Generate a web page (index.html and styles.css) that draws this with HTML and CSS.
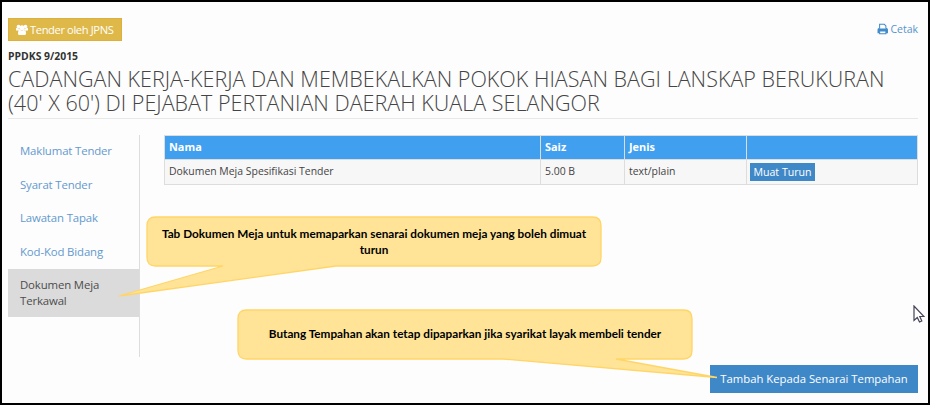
FILE: index.html
```html
<!DOCTYPE html>
<html lang="ms">
<head>
<meta charset="utf-8">
<title>Tender</title>
<link rel="stylesheet" href="styles.css">
</head>
<body>
<main class="page">
  <div class="topbar">
    <span class="badge"><svg class="icon-users" viewBox="0 0 24 22"><circle cx="5" cy="5" r="3.6"/><circle cx="19" cy="5" r="3.6"/><circle cx="12" cy="7.5" r="5"/><path d="M0 13V10q0-3 2-2.5 3 2 5 1 0 3 1.5 4zM24 13V10q0-3-2-2.500-3 2-5 1 0 3-1.500 4zM4 19q0-7 4-7.500 4 3 8 0 4 .5 4 7.500 0 3-3 3H7q-3 0-3-3z"/></svg><span class="badge-text">Tender oleh JPNS</span></span>
    <a class="print"><svg class="icon-print" viewBox="0 0 22 22"><path class="body" d="M1 19v-7q0-3 3-3h14q3 0 3 3v7h-4v-3H5v3z"/><path class="sheet" d="M5 10V2h9l3 3v5M5 15v5h12v-5z"/></svg><span class="print-text">Cetak</span></a>
  </div>
  <div class="code">PPDKS 9/2015</div>
  <h1>CADANGAN KERJA-KERJA DAN MEMBEKALKAN POKOK HIASAN BAGI LANSKAP BERUKURAN<br>(40' X 60') DI PEJABAT PERTANIAN DAERAH KUALA SELANGOR</h1>
  <div class="content">
    <nav class="tabs">
      <a>Maklumat Tender</a>
      <a>Syarat Tender</a>
      <a>Lawatan Tapak</a>
      <a>Kod-Kod Bidang</a>
      <a class="active">Dokumen Meja<br>Terkawal</a>
    </nav>
    <section class="panel">
      <table>
        <colgroup><col class="c-name"><col class="c-size"><col class="c-type"><col></colgroup>
        <thead><tr><th>Nama</th><th>Saiz</th><th>Jenis</th><th></th></tr></thead>
        <tbody><tr><td>Dokumen Meja Spesifikasi Tender</td><td>5.00 B</td><td>text/plain</td><td class="action"><a class="download">Muat Turun</a></td></tr></tbody>
      </table>
    </section>
  </div>
  <div class="footer"><a class="order">Tambah Kepada Senarai Tempahan</a></div>
</main>
<div class="callout first">
  <svg class="shape" viewBox="0 0 454 49"><path d="M8.500 0H445.500Q454 0 454 8.500V40.500Q454 49 445.500 49H189L-28 79 76 49H8.500Q0 49 0 40.500V8.500Q0 0 8.500 0z"/></svg>
  <span class="note">Tab Dokumen Meja untuk memaparkan senarai dokumen meja yang boleh dimuat<br>turun</span>
</div>
<div class="callout second">
  <svg class="shape" viewBox="0 0 454 49"><path d="M8.500 0H445.500Q454 0 454 8.500V40.500Q454 49 445.500 49H378L479 67.500 265 49H8.500Q0 49 0 40.500V8.500Q0 0 8.500 0z"/></svg>
  <span class="note">Butang Tempahan akan tetap dipaparkan jika syarikat layak membeli tender</span>
</div>
<svg class="cursor" viewBox="0 0 12 18"><path d="M1 1V15.500L4.300 12.500 6.500 17 8.800 16 6.800 11.500H11z"/></svg>
</body>
</html>
```

FILE: styles.css
```css
* { box-sizing: border-box; }
body {
  margin: 0;
  font-family: "Open Sans", sans-serif;
  font-size: 11px;
  color: #444;
  background: #fdfdfd;
}
.page {
  width: 930px;
  height: 405px;
  border: 2px solid #000;
  padding: 16px 10px 0 6px;
  display: flex;
  flex-direction: column;
  overflow: hidden;
}
.topbar {
  display: flex;
  justify-content: space-between;
  height: 23px;
}
.badge {
  display: flex;
  align-items: center;
  width: 114px;
  padding-left: 7px;
  gap: 2px;
  background: #deb849;
  border: 1px solid #dcb03a;
  color: #fff;
  font-size: 11.200px;
  white-space: nowrap;
}
.badge, .print { line-height: 15px; }
.icon-users { width: 12px; height: 11px; fill: #fff; flex: none; }
.badge-text { letter-spacing: -0.4px; }
.print { display: flex; align-items: center; height: 22px; gap: 2px; color: #5594cf; font-size: 10.500px; }
.icon-print { width: 11.500px; height: 12px; }
.icon-print .body { fill: #428bca; }
.icon-print .sheet { fill: #fdfdfd; stroke: #428bca; stroke-width: 2; }
.code {
  margin-top: 8px;
  height: 15px;
  line-height: 15px;
  font-size: 10.400px;
  font-weight: 700;
  color: #333;
}
h1 {
  margin: 3px 0 0;
  height: 52px;
  font-size: 21.500px;
  letter-spacing: 0.020px;
  line-height: 23.500px;
  font-weight: 300;
  color: #444;
  white-space: nowrap;
  border-bottom: 1px solid #e8e8e8;
}
.content { display: flex; height: 222px; margin-top: 16px; }
.tabs {
  width: 132px;
  display: flex;
  flex-direction: column;
  border-right: 1px solid #ddd;
}
.tabs a {
  height: 33.500px;
  padding: 8px 12px;
  line-height: 16px;
  font-size: 11.400px;
  letter-spacing: -0.140px;
  color: #6499ce;
  white-space: nowrap;
}
.tabs .active { height: 48px; background: #dbdbdb; color: #4c4c4c; }
.panel { padding-left: 24px; flex: 1; }
table {
  width: 754px;
  table-layout: fixed;
  border-collapse: collapse;
}
.c-name { width: 376px; }
.c-size { width: 84px; }
.c-type { width: 122px; }
th, td {
  border: 1px solid #ddd;
  padding: 0 3px 2px 4px;
  text-align: left;
  line-height: 15px;
  white-space: nowrap;
}
th {
  height: 24px;
  background: #419ff0;
  color: #fff;
  font-size: 10.900px;
}
td { height: 25px; background: #f7f7f7; font-size: 10.450px; }
td.action { padding: 0 3px; }
.download, .order { display: inline-flex; align-items: center; justify-content: center; color: #fff; background: #3f88c8; white-space: nowrap; }
.download { width: 65px; height: 18px; font-size: 10.600px; vertical-align: middle; }
.footer { display: flex; justify-content: flex-end; margin-top: 8px; }
.order { width: 208px; height: 28px; padding-bottom: 1px; font-size: 11.300px; }
.callout {
  position: absolute;
  width: 454px;
  height: 49px;
  display: flex;
  align-items: center;
  justify-content: center;
  text-align: center;
}
.first { left: 147px; top: 217px; }
.second { left: 238px; top: 309.500px; }
.shape { position: absolute; inset: 0; width: 454px; height: 49px; overflow: visible; }
.shape path { fill: #ffe497; stroke: #ffd566; stroke-width: 1.300; }
.note {
  position: relative;
  font: 700 11.750px/15.500px Lato, sans-serif;
  color: #000;
  white-space: nowrap;
}
.cursor { position: absolute; left: 913px; top: 305px; width: 12px; height: 18px; }
.cursor path { fill: #fff; stroke: #444455; stroke-width: 1.200; }
```
